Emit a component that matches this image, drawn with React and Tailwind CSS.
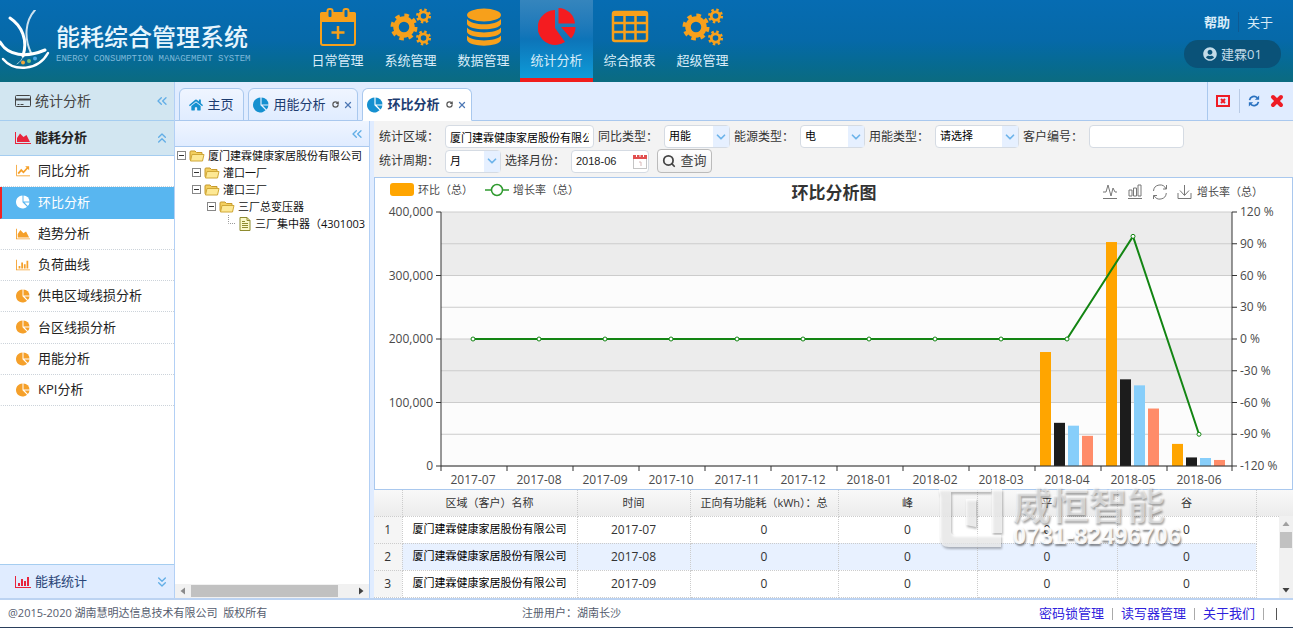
import { ChevronDown, ChevronsDown, ChevronsLeft, ChevronsUp, RotateCw, Search, X } from "lucide-react";
import { FaHome, FaUserCircle } from "react-icons/fa";

const COMPANY = "厦门建霖健康家居股份有限公司";

const NAV = [
  { label: "日常管理", icon: CalendarPlusIcon },
  { label: "系统管理", icon: GearsIcon },
  { label: "数据管理", icon: DatabaseIcon },
  { label: "统计分析", icon: PieSplitIcon, active: true },
  { label: "综合报表", icon: GridIcon },
  { label: "超级管理", icon: GearsIcon },
];

const MENU = [
  { label: "同比分析", icon: LineIcon },
  { label: "环比分析", icon: PieIcon, active: true },
  { label: "趋势分析", icon: AreaIcon },
  { label: "负荷曲线", icon: BarsIcon },
  { label: "供电区域线损分析", icon: PieIcon },
  { label: "台区线损分析", icon: PieIcon },
  { label: "用能分析", icon: PieIcon },
  { label: "KPI分析", icon: PieIcon },
];

const TREE = [
  { label: COMPANY, indent: "pl-0.5" },
  { label: "灌口一厂", indent: "pl-[17px]" },
  { label: "灌口三厂", indent: "pl-[17px]" },
  { label: "三厂总变压器", indent: "pl-8" },
  { label: "三厂集中器（4301003", indent: "pl-12", leaf: true },
];

const MONTHS = [
  "2017-07", "2017-08", "2017-09", "2017-10", "2017-11", "2017-12",
  "2018-01", "2018-02", "2018-03", "2018-04", "2018-05", "2018-06",
];

const GROWTH = [0, 0, 0, 0, 0, 0, 0, 0, 0, 0, 97, -90];

const BAR_COLORS = ["#ffa500", "#1c1c1c", "#87cefa", "#ff8c69"];

const BARS = {
  9: [179500, 68000, 63500, 47500],
  10: [352700, 136500, 127000, 90500],
  11: [34800, 13500, 12600, 9500],
};

const ROWS = ["2017-07", "2017-08", "2017-09"];

function CalendarPlusIcon({ className }) {
  return (
    <svg className={className} viewBox="0 0 38 38" fill="none" stroke="currentColor">
      <rect x="2" y="5" width="34" height="32" rx="2" strokeWidth="2" />
      <path d="M1 6 Q1 4 3 4 H35 Q37 4 37 6 V14 H1Z" fill="currentColor" stroke="none" />
      <rect x="8.5" y="1" width="5" height="9" rx="2" fill="#066bb0" strokeWidth="2" />
      <rect x="24.5" y="1" width="5" height="9" rx="2" fill="#066bb0" strokeWidth="2" />
      <path d="M19 18 V31 M12.500 24.500 H25.500" strokeWidth="2.500" />
    </svg>
  );
}

function GearsIcon({ className }) {
  return (
    <svg className={className} viewBox="0 0 38 38" overflow="visible" fill="none" stroke="currentColor">
      <circle cx="12" cy="19" r="8" strokeWidth="5.500" />
      <circle cx="12" cy="19" r="11.500" strokeWidth="4" strokeDasharray="4.500 4.532" />
      <circle cx="31.500" cy="8" r="4.200" strokeWidth="2.800" />
      <circle cx="31.500" cy="8" r="6.200" strokeWidth="2.600" strokeDasharray="2.400 2.470" />
      <circle cx="31.500" cy="30" r="4.200" strokeWidth="2.800" />
      <circle cx="31.500" cy="30" r="6.200" strokeWidth="2.600" strokeDasharray="2.400 2.470" />
    </svg>
  );
}

function DatabaseIcon({ className }) {
  return (
    <svg className={className} viewBox="0 0 38 38" fill="currentColor">
      <ellipse cx="19" cy="7" rx="17" ry="6.500" />
      <path d="M2 11 C7 18 31 18 36 11 V16 C34 23 4 23 2 16Z" />
      <path d="M2 19.500 C7 26 31 26 36 19.500 V24 C34 31 4 31 2 24Z" />
      <path d="M2 27.500 C7 34 31 34 36 27.500 V32 C34 39.500 4 39.500 2 32Z" />
    </svg>
  );
}

function PieSplitIcon({ className }) {
  return (
    <svg className={className} viewBox="0 0 38 38" fill="currentColor">
      <path d="M17 2 A17.500 17.500 0 1 0 27 34 L17 20Z" />
      <path d="M20.500 0 A17 17 0 0 1 37 15.500 H20.500Z" />
      <path d="M23 19 H37.500 A17 17 0 0 1 33 30.500Z" />
    </svg>
  );
}

function GridIcon({ className }) {
  return (
    <svg className={className} viewBox="0 0 38 38" fill="none" stroke="currentColor">
      <rect x="2" y="4" width="34" height="29" rx="2" strokeWidth="2.500" />
      <path d="M2 6 H36" strokeWidth="4" />
      <path d="M2 15 H36 M2 24 H36 M13.500 6 V33 M24.500 6 V33" strokeWidth="2.500" />
    </svg>
  );
}

function CardIcon({ className }) {
  return (
    <svg className={className} viewBox="0 0 16 14" fill="none" stroke="currentColor">
      <rect x="0.500" y="1.500" width="15" height="11" rx="1" />
      <path d="M1 5.500 H15" strokeWidth="2" />
      <path d="M2.500 10.500 H4.500 M5.500 10.500 H8.500" />
    </svg>
  );
}

function LineIcon({ className }) {
  return (
    <svg className={className} viewBox="0 0 16 14" fill="none" stroke="currentColor">
      <path d="M0.500 0 V12.500 H16" />
      <path d="M2.500 10 L6 6 L8.500 8.500 L13.500 3" strokeWidth="2" />
      <path d="M10.500 1.500 H15 V6Z" fill="currentColor" stroke="none" />
    </svg>
  );
}

function AreaIcon({ className }) {
  return (
    <svg className={className} viewBox="0 0 16 14" fill="currentColor">
      <path d="M0 1 H1 V12 H16 V13 H0Z" />
      <path d="M2 11 V7 L5 2.500 L8.500 6 L11.500 4 L15 11Z" />
    </svg>
  );
}

function BarsIcon({ className }) {
  return (
    <svg className={className} viewBox="0 0 16 14" fill="currentColor">
      <path d="M0 1 H1 V12 H16 V13 H0Z" />
      <path d="M3 8 H5 V11 H3Z M6 4 H8 V11 H6Z M9 6 H11 V11 H9Z M12 2 H14 V11 H12Z" />
    </svg>
  );
}

function PieIcon({ className }) {
  return (
    <svg className={className} viewBox="0 0 14 14" fill="currentColor">
      <path d="M6.500 0.500 A6.500 6.500 0 1 0 11 11.700 L6.500 7.200Z" />
      <path d="M7.500 0.500 A6 6 0 0 1 13.500 6.500 H7.500Z" />
      <path d="M8.500 7.500 H13.500 A6 6 0 0 1 11.800 11Z" />
    </svg>
  );
}

function FolderIcon() {
  return (
    <svg className="h-3 w-4 shrink-0" viewBox="0 0 16 12">
      <path d="M1 2 Q1 1 2 1 H6 L7.500 2.500 H13 V10.500 H2 Q1 10.500 1 9Z" fill="#f3cf5f" stroke="#c79a2c" />
      <path d="M3 4.500 H15 L13.500 11 H1.500Z" fill="#fde894" stroke="#d0a838" />
    </svg>
  );
}

function FileIcon() {
  return (
    <svg className="h-3.5 w-3.5 shrink-0" viewBox="0 0 14 14">
      <path d="M2 0.500 H9 L12 3.500 V13.500 H2Z" fill="#fbf9c8" stroke="#8e8b2f" />
      <path d="M9 0.500 V3.500 H12 M4 4.500 H7 M4 6.500 H10 M4 8.500 H10 M4 10.500 H10" fill="none" stroke="#8e8b2f" />
    </svg>
  );
}

function MinusBox() {
  return (
    <svg className="h-[9px] w-[9px] shrink-0" viewBox="0 0 9 9" fill="#fff" stroke="#888">
      <rect x="0.500" y="0.500" width="8" height="8" />
      <path d="M2 4.500 H7" stroke="#333" />
    </svg>
  );
}

function RefreshIcon({ className }) {
  return (
    <svg className={className} viewBox="0 0 14 14" fill="none" stroke="currentColor" strokeWidth="2">
      <path d="M1.800 6 A5.300 5.300 0 0 1 10.800 3.200 M12.200 8 A5.300 5.300 0 0 1 3.200 10.800" />
      <path d="M13 0.500 V5.500 H8Z M1 13.500 V8.500 H6Z" fill="currentColor" stroke="none" />
    </svg>
  );
}

function Logo() {
  return (
    <svg className="h-[62px] w-[50px] shrink-0" viewBox="0 0 50 62" fill="none" stroke="#fff" strokeLinecap="round">
      <path d="M10 8 C22 16 28 30 23 46" strokeWidth="3" />
      <path d="M23 46 C22 50 20 52 17 54" strokeWidth="1" opacity="0.600" />
      <path d="M35 0 C25 11 24 28 31 43" strokeWidth="2" opacity="0.800" />
      <path d="M0 32 C8 46 26 48 45 40" strokeWidth="3" />
      <path d="M3 49 C14 62 38 61 48 43" strokeWidth="2.500" />
      <circle cx="23" cy="52.500" r="2" fill="#f2a73a" stroke="none" />
      <circle cx="29" cy="51" r="2" fill="#7ac37a" stroke="none" />
      <circle cx="35" cy="48.500" r="2" fill="#4fa9e6" stroke="none" />
    </svg>
  );
}

function Header() {
  return (
    <header className="flex h-[82px] shrink-0 bg-linear-to-b from-[#066cb2] via-[#0669a8] to-[#0b6b80]">
      <div className="flex w-[301px] shrink-0 items-center gap-1.5">
        <Logo />
        <div className="pt-1 whitespace-nowrap">
          <h1 className="text-2xl leading-8 font-medium text-[#e6f5fd]">能耗综合管理系统</h1>
          <p className="font-['Liberation_Mono',monospace] text-[9px] leading-3 text-[#7fb9da]">
            ENERGY CONSUMPTION MANAGEMENT SYSTEM
          </p>
        </div>
      </div>
      <nav className="flex">
        {NAV.map(({ label, icon: Icon, active }) => (
          <a
            key={label}
            href="#"
            className={`flex w-[73px] flex-col items-center border-b-4 pt-2 text-[13px] leading-5 text-[#d8ecf8] ${
              active ? "border-[#f01d1d] bg-linear-to-b from-[#3585bd] via-[#0d74b8] to-[#0f9bd8]" : "border-transparent"
            }`}
          >
            <Icon className={active ? "h-[38px] w-[38px] text-[#f41c20]" : "h-[38px] w-[38px] text-[#f7a01b]"} />
            <span className="pt-1">{label}</span>
          </a>
        ))}
      </nav>
      <div className="ml-auto flex flex-col items-end gap-2 pt-3 pr-3 text-[13px] leading-5 text-[#d8ecf8]">
        <div className="flex pr-2">
          <a href="#" className="border-r border-[#0d5a94] pr-2 font-bold">帮助</a>
          <a href="#" className="pl-2">关于</a>
        </div>
        <button className="flex h-7 w-[97px] items-center justify-center gap-1 rounded-full bg-[#0a5278] text-[#c3dce9]">
          <FaUserCircle className="h-3.5 w-3.5" />
          建霖01
        </button>
      </div>
    </header>
  );
}

function Sidebar() {
  return (
    <aside className="flex w-[175px] shrink-0 flex-col border-r border-[#b3d0f5] bg-white text-[13px] text-[#222]">
      <div className="flex h-[39px] items-center gap-1 border-b border-[#a5cdf0] bg-[#d2e6f1] pr-1 pl-[15px] text-sm text-[#444]">
        <CardIcon className="h-3.5 w-4" />
        <span className="flex-1">统计分析</span>
        <ChevronsLeft className="h-4 w-4 text-[#62aee6]" />
      </div>
      <div className="flex h-[35px] items-center gap-1 border-b border-[#a5cdf0] bg-[#d2e6f1] pr-1 pl-[15px] font-bold">
        <AreaIcon className="h-3.5 w-4 text-[#e8243c]" />
        <span className="flex-1">能耗分析</span>
        <ChevronsUp className="h-4 w-4 text-[#62aee6]" />
      </div>
      <ul className="grid h-[250px] grid-rows-8">
        {MENU.map(({ label, icon: Icon, active }) => (
          <li key={label}>
            <a
              href="#"
              className={`flex h-full items-center gap-2 border-b border-l-2 pl-3.5 ${
                active
                  ? "border-b-[#58b6f0] border-l-[#f02222] bg-[#58b6f0] text-white"
                  : "border-b-[#ccd3da] border-l-transparent border-dotted"
              }`}
            >
              <Icon className={active ? "h-3.5 w-3.5 text-white" : "h-3.5 w-3.5 text-[#f5a02a]"} />
              {label}
            </a>
          </li>
        ))}
      </ul>
      <div className="mt-auto flex h-[34px] items-center gap-1 border-t border-[#a5cdf0] bg-[#e0ecff] pr-1 pl-[15px] text-[#2a4577]">
        <BarsIcon className="h-3.5 w-4 text-[#e8243c]" />
        <span className="flex-1">能耗统计</span>
        <ChevronsDown className="h-4 w-4 text-[#62aee6]" />
      </div>
    </aside>
  );
}

function Tab({ label, active }) {
  return (
    <div
      className={`flex h-[33px] w-[110px] items-center justify-center gap-1 rounded-t-md border border-[#a9c8ee] text-[13px] text-[#1d3c70] ${
        active ? "border-b-white bg-white font-bold" : "bg-linear-to-b from-[#eff5ff] to-[#e0ecff]"
      }`}
    >
      <PieIcon className="h-4 w-4 text-[#1590d0]" />
      {label}
      <button aria-label="刷新" className="pl-0.5">
        <RotateCw className="h-[7px] w-[7px] text-[#555]" strokeWidth={4} />
      </button>
      <button aria-label="关闭">
        <X className="h-2.5 w-2.5 text-[#4f79b5]" strokeWidth={3} />
      </button>
    </div>
  );
}

function TabBar() {
  return (
    <div className="flex h-[39px] shrink-0 items-end border-b border-[#a9c8ee] bg-[#e0ecff] pl-1">
      <div className="-mb-px flex gap-1">
        <div className="flex h-[33px] w-[65px] items-center justify-center gap-1 rounded-t-md border border-[#a9c8ee] bg-linear-to-b from-[#eff5ff] to-[#e0ecff] text-[13px] text-[#1d3c70]">
          <FaHome className="h-3.5 w-3.5 text-[#1590d0]" />
          主页
        </div>
        <Tab label="用能分析" />
        <Tab label="环比分析" active />
      </div>
      <div className="ml-auto flex h-full w-[86px] items-center justify-between border-l border-[#a9c8ee] px-2">
        <button aria-label="关闭全部">
          <svg className="h-3 w-3.5" viewBox="0 0 14 12" fill="none" stroke="#ee1c25">
            <rect x="1" y="1" width="12" height="10" strokeWidth="2" />
            <path d="M5 4 L9 8 M9 4 L5 8" strokeWidth="2" />
          </svg>
        </button>
        <span className="h-6 w-px bg-[#b9cbe6]" />
        <button aria-label="刷新">
          <RefreshIcon className="h-3 w-3 text-[#2b72c0]" />
        </button>
        <button aria-label="关闭">
          <X className="h-4 w-4 text-[#ee1c25]" strokeWidth={6} />
        </button>
      </div>
    </div>
  );
}

function TreePanel() {
  return (
    <section className="flex w-[195px] shrink-0 flex-col border-r border-[#b3d0f5] bg-white">
      <div className="flex h-[26px] items-center justify-end border-b border-[#a9c8ee] bg-linear-to-b from-[#eff5ff] to-[#e0ecff] pr-1">
        <ChevronsLeft className="h-4 w-4 text-[#62aee6]" />
      </div>
      <ul className="flex-1 overflow-hidden text-[11px] leading-[17px] whitespace-nowrap text-[#111]">
        {TREE.map(({ label, indent, leaf }) => (
          <li key={label} className={`flex h-[17px] items-center gap-[3px] ${indent}`}>
            {leaf ? (
              <svg className="h-[17px] w-3 shrink-0" viewBox="0 0 12 17" fill="none" stroke="#999" strokeDasharray="1 1">
                <path d="M5.500 0 V8.500 H12" />
              </svg>
            ) : (
              <MinusBox />
            )}
            {leaf ? <FileIcon /> : <FolderIcon />}
            <span>{label}</span>
          </li>
        ))}
      </ul>
      <div className="flex h-3.5 items-center bg-[#f1f1f1] px-1">
        <Arrow className="h-2 w-2 rotate-180 text-[#8a8a8a]" />
        <span className="ml-1 h-3 w-[147px] bg-[#c1c1c1]" />
        <Arrow className="ml-auto h-2 w-2 text-[#404040]" />
      </div>
    </section>
  );
}

function Arrow({ className }) {
  return (
    <svg className={className} viewBox="0 0 8 8" fill="currentColor">
      <path d="M2 0.500 L6.500 4 L2 7.500Z" />
    </svg>
  );
}

function Field({ id, label, children }) {
  return (
    <div className="flex h-[23px] items-center">
      <label htmlFor={id} className="w-[66px] shrink-0 text-xs text-[#333]">{label}</label>
      {children}
    </div>
  );
}

function SelectBox({ id, value, width }) {
  return (
    <div className={`relative ${width}`}>
      <select
        id={id}
        className="block h-[23px] w-full appearance-none rounded-sm border border-[#d5dbe3] bg-white pl-1 text-[11px] text-black"
      >
        <option>{value}</option>
      </select>
      <span className="pointer-events-none absolute inset-y-px right-px flex w-4 items-center justify-center bg-[#e6f0ff]">
        <ChevronDown className="h-3.5 w-3.5 text-[#6db4ea]" strokeWidth={3} />
      </span>
    </div>
  );
}

function Filters() {
  return (
    <form className="flex h-14 flex-col gap-px bg-[#f3f3f3] pt-1 pl-[5px]">
      <div className="flex gap-1">
        <Field id="area" label="统计区域：">
          <input
            id="area"
            defaultValue={COMPANY}
            className="h-[23px] w-[149px] rounded-sm border border-[#d5dbe3] bg-white px-1 text-[11px] text-black"
          />
        </Field>
        <Field id="compare" label="同比类型：">
          <SelectBox id="compare" value="用能" width="w-[66px]" />
        </Field>
        <Field id="energy" label="能源类型：">
          <SelectBox id="energy" value="电" width="w-[65px]" />
        </Field>
        <Field id="usage" label="用能类型：">
          <SelectBox id="usage" value="请选择" width="w-[84px]" />
        </Field>
        <Field id="customer" label="客户编号：">
          <input id="customer" className="h-[23px] w-[95px] rounded-sm border border-[#d5dbe3] bg-white px-1 text-[11px]" />
        </Field>
      </div>
      <div className="flex items-center gap-1">
        <Field id="period" label="统计周期：">
          <SelectBox id="period" value="月" width="w-[56px]" />
        </Field>
        <Field id="month" label="选择月份：">
          <div className="relative w-[78px]">
            <input
              id="month"
              defaultValue="2018-06"
              className="block h-[23px] w-full rounded-sm border border-[#d5dbe3] bg-white px-1 font-['Liberation_Sans',sans-serif] text-[11px] text-[#222]"
            />
            <svg className="absolute top-1 right-0.5 h-4 w-3.5" viewBox="0 0 14 16">
              <rect x="0.500" y="1.500" width="13" height="13" fill="#fff" stroke="#c5c5c5" />
              <rect x="0" y="1" width="14" height="4" fill="#e25050" />
              <path d="M3.500 0 V3 M7 0 V3 M10.500 0 V3" stroke="#fff" />
              <path d="M6 8 H8 V12" fill="none" stroke="#d8b8b8" />
            </svg>
          </div>
        </Field>
        <button
          type="button"
          className="ml-1 flex h-6 w-[55px] items-center justify-center gap-1 rounded-sm border border-[#bbb] bg-linear-to-b from-white to-[#eee] text-[13px] text-[#444]"
        >
          <Search className="h-3.5 w-3.5" strokeWidth={3} />
          查询
        </button>
      </div>
    </form>
  );
}

// plot area inside the 917x311 view box
const PLOT = { left: 66, right: 857, top: 34, bottom: 288 };
const STEP = 66;
const HEIGHT = PLOT.bottom - PLOT.top;

const pointX = (i) => PLOT.left + 32 + i * STEP;
const valueY = (v) => PLOT.bottom - (v / 400000) * HEIGHT;
const growthY = (v) => PLOT.bottom - ((v + 120) / 240) * HEIGHT;

function Chart() {
  const ticks = [120, 90, 60, 30, 0, -30, -60, -90, -120];
  const points = GROWTH.map((v, i) => `${pointX(i)},${growthY(v)}`).join(" ");

  return (
    <div className="border border-[#a9c8ee] bg-white">
      <svg className="block w-full" viewBox="0 0 917 311" fill="#4a4a4a">
        <rect x="15" y="5" width="24" height="13" rx="3" fill="#ffa500" />
        <text x="43" y="16" className="text-[11px]">环比（总）</text>
        <path d="M110 12 H134" stroke="#2f9a2f" strokeWidth="1.500" />
        <circle cx="122" cy="12" r="5.500" fill="#fff" stroke="#2f9a2f" strokeWidth="1.500" />
        <text x="138" y="16" className="text-[11px]">增长率（总）</text>
        <text x="459" y="21" textAnchor="middle" fill="#333" className="text-[17px] font-bold">环比分析图</text>

        <g fill="none" stroke="#777">
          <path d="M728 14 H731 L733 7 L736 18 L738 10 L740 14 H742 M728 20.500 H742" />
          <path d="M754 12 H757 V18 H754Z M758.500 10 H761.500 V18 H758.500Z M763 7 H766 V18 H763Z M753 20.500 H767" />
          <path d="M778.500 13 A6.500 6.500 0 0 1 791 11 M791.300 15 A6.500 6.500 0 0 1 779 17.500 M778.500 21 V17.500 H782 M791.500 7 V11 H788" />
          <path d="M809.500 7 V17 M805 12.500 L809.500 17.500 L814 12.500 M803 15 V20.500 H816 V15" />
        </g>
        <text x="822" y="18" className="text-[11px]">增长率（总）</text>

        {[0, 1, 2, 3].map((i) => (
          <rect
            key={i}
            x={PLOT.left}
            y={PLOT.top + (i * HEIGHT) / 4}
            width={PLOT.right - PLOT.left}
            height={HEIGHT / 4}
            fill={i % 2 ? "#fcfcfc" : "#ececec"}
          />
        ))}
        {ticks.map((t) => (
          <g key={t}>
            <path d={`M${PLOT.left} ${growthY(t)} H${PLOT.right}`} stroke="#ccc" />
            <path d={`M${PLOT.right} ${growthY(t)} h5`} stroke="#333" />
            <text x="865" y={growthY(t) + 4} className="text-xs">{t} %</text>
          </g>
        ))}
        {[400000, 300000, 200000, 100000, 0].map((v) => (
          <g key={v}>
            <path d={`M${PLOT.left - 5} ${valueY(v)} h5`} stroke="#333" />
            <text x="58" y={valueY(v) + 4} textAnchor="end" className="text-xs">{v.toLocaleString("en-US")}</text>
          </g>
        ))}
        {MONTHS.map((m, i) => (
          <g key={m}>
            <path d={`M${PLOT.left + i * STEP} ${PLOT.bottom} v5`} stroke="#333" />
            <text x={pointX(i)} y="306" textAnchor="middle" className="text-xs">{m}</text>
          </g>
        ))}
        {Object.entries(BARS).map(([i, values]) =>
          values.map((v, k) => (
            <rect
              key={`${i}-${k}`}
              x={pointX(Number(i)) - 27 + k * 14}
              y={valueY(v)}
              width="11"
              height={PLOT.bottom - valueY(v)}
              fill={BAR_COLORS[k]}
            />
          )),
        )}
        <path
          d={`M${PLOT.left} ${PLOT.top} V${PLOT.bottom} H${PLOT.right} V${PLOT.top} M${PLOT.right} ${PLOT.bottom} v5`}
          fill="none"
          stroke="#333"
        />
        <polyline points={points} fill="none" stroke="#138513" strokeWidth="2" />
        {GROWTH.map((v, i) => (
          <circle key={i} cx={pointX(i)} cy={growthY(v)} r="2" fill="#fff" stroke="#138513" />
        ))}
      </svg>
    </div>
  );
}

function DataTable() {
  const head = ["", "区域（客户）名称", "时间", "正向有功能耗（kWh）：总", "峰", "平", "谷", ""];
  return (
    <div className="relative min-h-0 flex-1 overflow-hidden bg-white">
      <table className="w-full table-fixed border-collapse text-center text-xs text-[#333]">
        <colgroup>
          <col className="w-[28px]" />
          <col className="w-[175px]" />
          <col className="w-[113px]" />
          <col className="w-[148px]" />
          <col className="w-[139px]" />
          <col className="w-[140px]" />
          <col className="w-[139px]" />
          <col />
        </colgroup>
        <thead>
          <tr className="h-[26px] bg-linear-to-b from-[#f9f9f9] to-[#ececec] text-[11px]">
            {head.map((h, i) => (
              <th key={i} className="border-r border-b border-dotted border-[#ccc] p-0 pt-0.5 font-normal whitespace-nowrap last:border-r-0">
                {h}
              </th>
            ))}
          </tr>
        </thead>
        <tbody>
          {ROWS.map((month, i) => (
            <tr key={month} className={i === 1 ? "h-[27px] bg-[#e8f1ff]" : "h-[27px]"}>
              <td className="border-r border-b border-dotted border-[#ccc] bg-[#f5f5f5] p-0">{i + 1}</td>
              <td className="border-r border-b border-dotted border-[#ccc] p-0 text-[11px] whitespace-nowrap text-black">{COMPANY}</td>
              <td className="border-r border-b border-dotted border-[#ccc] p-0">{month}</td>
              {[0, 1, 2, 3].map((c) => (
                <td key={c} className="border-r border-b border-dotted border-[#ccc] p-0">0</td>
              ))}
              <td className="bg-white" />
            </tr>
          ))}
        </tbody>
      </table>
      <div className="absolute top-[26px] right-0 bottom-0 flex w-3.5 flex-col items-center bg-[#f1f1f1] py-1">
        <Arrow className="h-2 w-2 -rotate-90 text-[#a0a0a0]" />
        <span className="mt-1 h-4 w-3 bg-[#c1c1c1]" />
        <Arrow className="mt-auto h-2 w-2 rotate-90 text-[#404040]" />
      </div>
    </div>
  );
}

function Watermark() {
  return (
    <div className="pointer-events-none absolute right-28 bottom-12 flex items-center gap-2.5 whitespace-nowrap">
      <svg className="h-[62px] w-[64px] text-white/70 drop-shadow-[1px_2px_1px_#0006]" viewBox="0 0 64 62" fill="currentColor">
        <path d="M0 2 H52 V5 H12 V44 Q12 48 16 48 H62 V60 H10 Q1 60 1 50 V9 L0 5Z" />
        <path d="M27 12 H37 V40 L27 38Z M53 2 H63 V46 H53Z" />
      </svg>
      <div className="font-bold">
        <p className="text-[38px] leading-9 text-white/50 text-shadow-[1px_2px_2px_#0005]">威恒智能</p>
        <p className="font-['Liberation_Sans',sans-serif] text-2xl leading-7 text-white/90 text-shadow-[1px_2px_2px_#0007]">
          0731-82496706
        </p>
      </div>
    </div>
  );
}

function Footer() {
  return (
    <footer className="flex h-[30px] shrink-0 items-center border-t-2 border-b border-t-[#bcd3f2] border-b-[#2a3f5c] bg-white pl-2 text-[11px] text-[#555c6e]">
      <p className="w-2/5 whitespace-pre">@2015-2020 湖南慧明达信息技术有限公司  版权所有</p>
      <p>注册用户：湖南长沙</p>
      <div className="ml-auto flex items-center gap-2 pr-4 text-[13px] text-[#2f22dc]">
        <a href="#">密码锁管理</a>
        <span className="h-3 w-px bg-[#aaa]" />
        <a href="#">读写器管理</a>
        <span className="h-3 w-px bg-[#aaa]" />
        <a href="#">关于我们</a>
        <span className="h-3 w-px bg-[#aaa]" />
        <span className="ml-1 h-3 w-px bg-[#555]" />
      </div>
    </footer>
  );
}

export default function App() {
  return (
    <div className="flex h-screen flex-col overflow-hidden border-r border-white bg-white font-['Open_Sans','Noto_Sans_CJK_SC',sans-serif]">
      <Header />
      <div className="flex min-h-0 flex-1">
        <Sidebar />
        <div className="flex min-w-0 flex-1 flex-col">
          <TabBar />
          <div className="flex min-h-0 flex-1 bg-[#e0ecff]">
            <TreePanel />
            <main className="relative ml-1 flex min-w-0 flex-1 flex-col">
              <Filters />
              <Chart />
              <DataTable />
              <Watermark />
            </main>
          </div>
        </div>
      </div>
      <Footer />
    </div>
  );
}
